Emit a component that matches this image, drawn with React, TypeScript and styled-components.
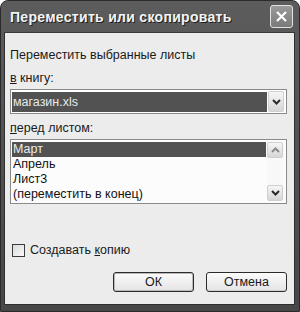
import React from 'react';
import styled, { createGlobalStyle } from 'styled-components';

const GlobalStyle = createGlobalStyle`
  html, body {
    margin: 0;
    padding: 0;
    background: #ffffff;
  }
`;

const Window = styled.div`
  width: 300px;
  height: 312px;
  box-sizing: border-box;
  background: linear-gradient(#5c5c5c, #474747);
  border: 1px solid #2a2a2a;
  border-radius: 8px 8px 0 0;
  padding: 0 4px 6px 3px;
  display: flex;
  flex-direction: column;
  font-family: 'Liberation Sans', Arial, sans-serif;
  font-size: 12.5px;
  color: #1a1a1a;
`;

const TitleBar = styled.div`
  height: 31px;
  display: flex;
  align-items: center;
  justify-content: space-between;
  padding: 0 2px 0 6px;
`;

const Title = styled.span`
  font-weight: bold;
  font-size: 14px;
  letter-spacing: 0.3px;
  color: #f4f4f4;
  text-shadow: 1px 1px 0 #1e1e1e;
`;

const CloseButton = styled.div`
  width: 21px;
  height: 21px;
  border: 1px solid #e2e2e2;
  border-radius: 3px;
  background: linear-gradient(#9a9a9a, #7a7a7a);
  display: flex;
  align-items: center;
  justify-content: center;
`;

const Body = styled.div`
  flex: 1;
  background: #ececec;
  border: 1px solid #2e2e2e;
  border-top-color: #3a3a3a;
  display: flex;
  flex-direction: column;
  padding: 0 7px 12px 5px;
`;

const Label = styled.div<{ $top: number }>`
  margin-top: ${p => p.$top}px;
  line-height: 16px;
  height: 16px;
  white-space: nowrap;
`;

const Key = styled.span`
  text-decoration: underline;
`;

const Combo = styled.div`
  margin-top: 3px;
  height: 25px;
  box-sizing: border-box;
  border: 1px solid #8a8a8a;
  background: #ffffff;
  padding: 1px 2px 1px 1px;
  display: flex;
  align-items: center;
  gap: 1px;
`;

const ComboValue = styled.div`
  flex: 1;
  height: 20px;
  background: #525252;
  color: #e8e8e8;
  line-height: 20px;
  padding-left: 1px;
`;

const ArrowButton = styled.div<{ $h: number }>`
  width: 16px;
  height: ${p => p.$h}px;
  box-sizing: border-box;
  border: 1px solid #cfcfcf;
  border-radius: 2px;
  background: linear-gradient(#f6f6f6, #d6d6d6);
  display: flex;
  align-items: center;
  justify-content: center;
`;

const ListBox = styled.div`
  margin-top: 3px;
  height: 65px;
  box-sizing: border-box;
  border: 1px solid #8a8a8a;
  background: #fcfcfc;
  display: flex;
  padding: 2px 2px 2px 1px;
`;

const Items = styled.div`
  flex: 1;
  display: flex;
  flex-direction: column;
`;

const Item = styled.div<{ $selected?: boolean }>`
  height: 15px;
  line-height: 15px;
  padding-left: 1px;
  background: ${p => (p.$selected ? '#525252' : 'transparent')};
  color: ${p => (p.$selected ? '#ececec' : '#111111')};
  white-space: nowrap;
`;

const ScrollBar = styled.div`
  width: 17px;
  margin-left: 1px;
  display: flex;
  flex-direction: column;
  justify-content: space-between;
  background: #f8f8f8;
`;

const CheckRow = styled.label`
  margin-top: 38px;
  display: flex;
  align-items: center;
  gap: 5px;
  height: 16px;
  padding-left: 2px;
`;

const CheckBox = styled.span`
  width: 13px;
  height: 13px;
  box-sizing: border-box;
  border: 1px solid #3c3c3c;
  background: linear-gradient(135deg, #dcdcdc, #f8f8f8);
`;

const Buttons = styled.div`
  margin-top: auto;
  display: flex;
  justify-content: flex-end;
  gap: 12px;
`;

const Button = styled.div<{ $default?: boolean }>`
  width: 81px;
  height: 20px;
  box-sizing: border-box;
  border: 1px solid #2c2c2c;
  border-radius: 3px;
  background: linear-gradient(#fbfbfb, #e4e4e4);
  box-shadow: ${p => (p.$default ? 'inset 0 0 0 1px #b8b8b8' : 'inset 0 -1px 0 #cfcfcf')};
  display: flex;
  align-items: center;
  justify-content: center;
`;

const Chevron = ({ up }: { up?: boolean }) => (
  <svg width="9" height="6" viewBox="0 0 9 6">
    <path
      d={up ? 'M1 5 L4.5 1.5 L8 5' : 'M1 1 L4.5 4.5 L8 1'}
      fill="none"
      stroke={up ? '#8a8a8a' : '#2a2a2a'}
      strokeWidth="2"
    />
  </svg>
);

export default function App() {
  return (
    <>
      <GlobalStyle />
      <Window>
        <TitleBar>
          <Title>Переместить или скопировать</Title>
          <CloseButton>
            <svg width="13" height="13" viewBox="0 0 13 13">
              <path d="M2 2 L11 11 M11 2 L2 11" stroke="#ffffff" strokeWidth="2.2" />
            </svg>
          </CloseButton>
        </TitleBar>
        <Body>
          <Label $top={14}>Переместить выбранные листы</Label>
          <Label $top={7}>
            <Key>в</Key> книгу:
          </Label>
          <Combo>
            <ComboValue>магазин.xls</ComboValue>
            <ArrowButton $h={21}>
              <Chevron />
            </ArrowButton>
          </Combo>
          <Label $top={6}>
            <Key>п</Key>еред листом:
          </Label>
          <ListBox>
            <Items>
              <Item $selected>Март</Item>
              <Item>Апрель</Item>
              <Item>Лист3</Item>
              <Item>(переместить в конец)</Item>
            </Items>
            <ScrollBar>
              <ArrowButton $h={16}>
                <Chevron up />
              </ArrowButton>
              <ArrowButton $h={16}>
                <Chevron />
              </ArrowButton>
            </ScrollBar>
          </ListBox>
          <CheckRow>
            <CheckBox />
            <span>
              Создавать <Key>к</Key>опию
            </span>
          </CheckRow>
          <Buttons>
            <Button $default>ОК</Button>
            <Button>Отмена</Button>
          </Buttons>
        </Body>
      </Window>
    </>
  );
}
